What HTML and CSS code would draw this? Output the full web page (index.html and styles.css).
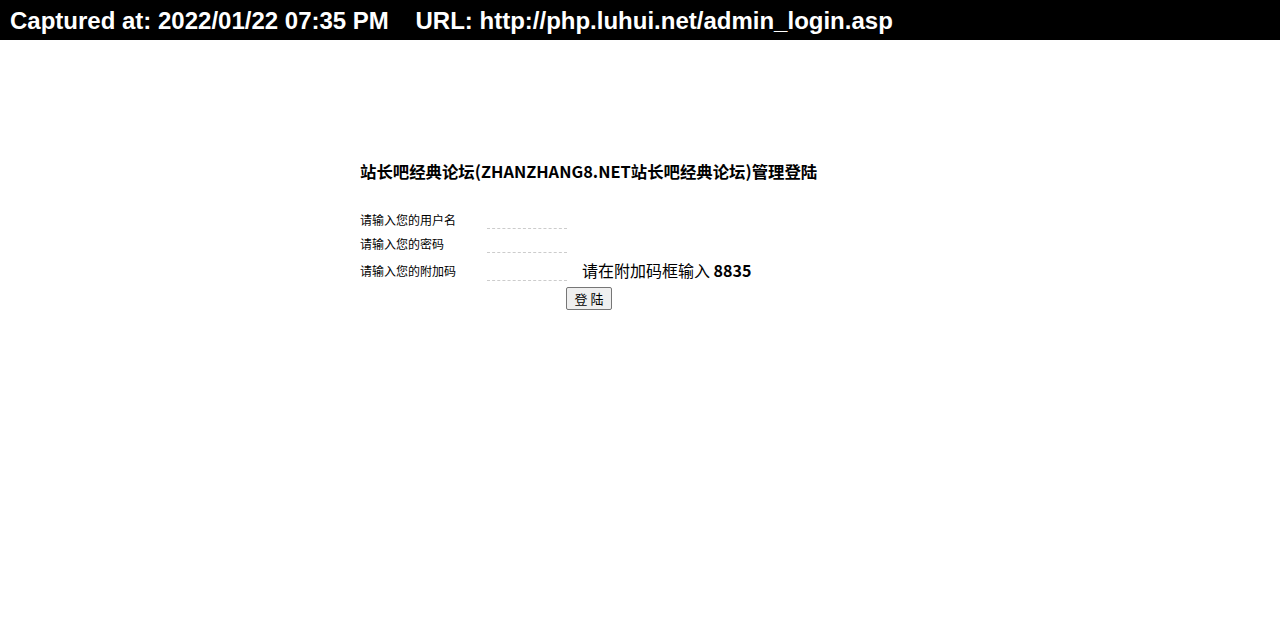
FILE: index.html
```html
<!DOCTYPE html>
<html>
<head>
<meta charset="utf-8">
<title>管理登陆</title>
<link rel="stylesheet" href="styles.css">
</head>
<body>
<div class="capbar">Captured at: 2022/01/22 07:35 PM&nbsp;&nbsp;&nbsp;&nbsp;URL: http://php.luhui.net/admin_login.asp</div>
<div class="main">
  <h1 class="title">站长吧经典论坛(ZHANZHANG8.NET站长吧经典论坛)管理登陆</h1>
  <table class="form">
    <tr class="row">
      <td class="label">请输入您的用户名</td>
      <td class="field" colspan="2"><input class="inp" type="text"></td>
    </tr>
    <tr class="row">
      <td class="label">请输入您的密码</td>
      <td class="field" colspan="2"><input class="inp" type="password"></td>
    </tr>
    <tr class="row3">
      <td class="label">请输入您的附加码</td>
      <td class="field"><input class="inp" type="text"></td>
      <td class="hint">请在附加码框输入 <b>8835</b></td>
    </tr>
    <tr>
      <td class="btncell" colspan="3"><button class="btn">登 陆</button></td>
    </tr>
  </table>
</div>
</body>
</html>
```
FILE: styles.css
```css
body {
  margin: 0;
  background: #fff;
  color: #000;
  font-family: "Noto Sans CJK SC", "Noto Sans", sans-serif;
}
.capbar {
  height: 40px;
  line-height: 42px;
  background: #000;
  color: #fff;
  font-family: "Liberation Sans", Arial, sans-serif;
  font-weight: bold;
  font-size: 24px;
  padding-left: 10px;
  white-space: nowrap;
}
.main {
  margin-left: 360px;
  width: 458px;
  padding-top: 119px;
}
.title {
  margin: 0 0 25px 0;
  font-size: 16.4px;
  line-height: 24px;
  font-weight: bold;
  white-space: nowrap;
}
.form {
  width: 458px;
  border-collapse: collapse;
}
.form td {
  padding: 0;
  vertical-align: middle;
}
.label {
  width: 127px;
  font-size: 12px;
  line-height: 18px;
}
.row td {
  height: 24px;
}
.field {
  width: 95px;
  vertical-align: top !important;
}
.inp {
  display: block;
  width: 80px;
  height: 17px;
  margin: 3px 0 0 0;
  padding: 0;
  border: 0;
  border-bottom: 1px dashed #ccc;
  background: transparent;
  outline: none;
}
.row3 td {
  height: 28px;
}
.row3 .label {
  padding-bottom: 1px;
}
.row3 .inp {
  margin-top: 7px;
}
.hint {
  font-size: 16px;
  line-height: 20px;
  padding-bottom: 3px !important;
}
.hint b {
  font-weight: bold;
}
.btncell {
  text-align: center;
  height: 30px;
  line-height: 0;
  vertical-align: top !important;
}
.btn {
  display: inline-block;
  vertical-align: top;
  font-family: "Noto Sans CJK SC", sans-serif;
  font-size: 13px;
  height: 23px;
  padding: 0 8px;
  margin-top: 0;
  line-height: 19px;
  border: 1px solid #767676;
  border-radius: 2px;
  background: #efefef;
  color: #000;
}
```
